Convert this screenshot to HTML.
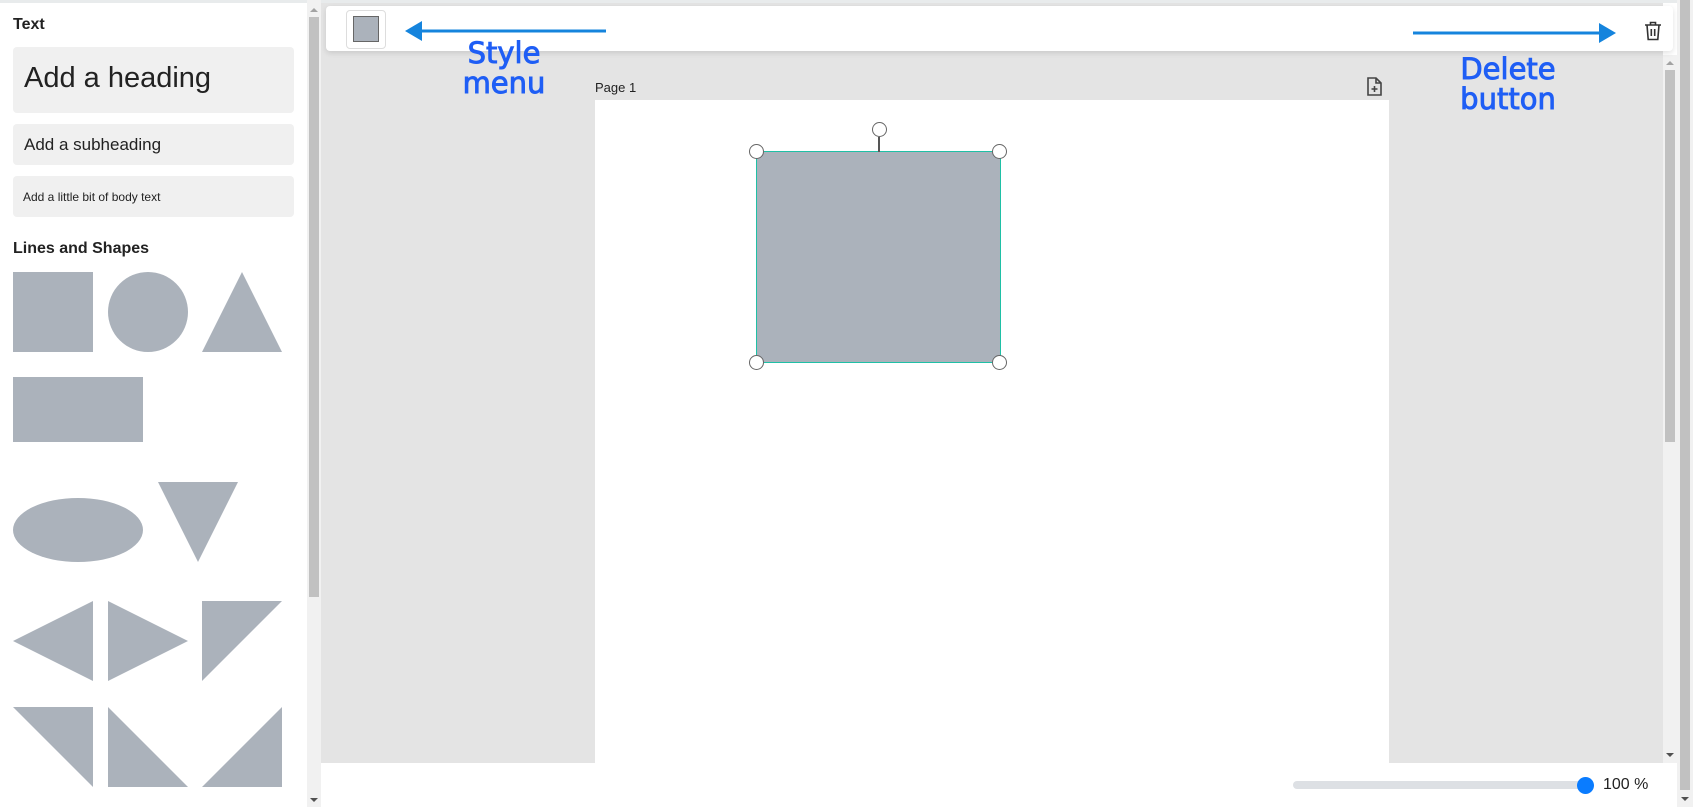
<!DOCTYPE html>
<html><head><meta charset="utf-8"><style>
*{margin:0;padding:0;box-sizing:border-box}
body{width:1693px;height:807px;overflow:hidden;background:#fff;font-family:"Liberation Sans",Arial,sans-serif;position:relative;color:#222}
.a{position:absolute}
.card{position:absolute;left:13px;width:281px;background:#f0f0f0;border-radius:4px;color:#222}
.lbl{position:absolute;font-weight:bold;font-size:16px;color:#222}
.ann{position:absolute;font-family:"DejaVu Sans",sans-serif;font-weight:normal;-webkit-text-stroke:0.9px #1f5ef5;font-size:29px;color:#1f5ef5;text-align:center;line-height:30px}
.h{position:absolute;width:15px;height:15px;border-radius:50%;background:#fff;border:1px solid #666}
</style></head><body>
<div class="a" style="left:0;top:0;width:1693px;height:3px;background:#e8ebec"></div>
<div class="lbl" style="left:13px;top:16px">Text</div>
<div class="card" style="top:47px;height:66px"><div class="a" style="left:11px;top:15px;font-size:29px">Add a heading</div></div>
<div class="card" style="top:124px;height:41px"><div class="a" style="left:11px;top:11px;font-size:17px">Add a subheading</div></div>
<div class="card" style="top:176px;height:41px"><div class="a" style="left:10px;top:14px;font-size:12px">Add a little bit of body text</div></div>
<div class="lbl" style="left:13px;top:240px">Lines and Shapes</div>
<svg class="a" style="left:0;top:260px" width="300" height="540" fill="#abb2bb">
<rect x="13" y="12" width="80" height="80"/>
<circle cx="148" cy="52" r="40"/>
<polygon points="242,12 282,92 202,92"/>
<rect x="13" y="117" width="130" height="65"/>
<ellipse cx="78" cy="270" rx="65" ry="32"/>
<polygon points="158,222 238,222 198,302"/>
<polygon points="93,341 93,421 13,381"/>
<polygon points="108,341 188,381 108,421"/>
<polygon points="202,341 282,341 202,421"/>
<polygon points="13,447 93,447 93,527"/>
<polygon points="108,447 188,527 108,527"/>
<polygon points="282,447 282,527 202,527"/>
</svg>
<div class="a" style="left:307px;top:0;width:14px;height:807px;background:#f1f1f1"></div>
<div class="a" style="left:309px;top:17px;width:10px;height:580px;background:#c1c1c1"></div>
<div class="a" style="left:310px;top:8px;border-left:4px solid transparent;border-right:4px solid transparent;border-bottom:4px solid #a3a3a3"></div>
<div class="a" style="left:310px;top:798px;border-left:4px solid transparent;border-right:4px solid transparent;border-top:4px solid #505050"></div>
<div class="a" style="left:321px;top:3px;width:1342px;height:760px;background:#e4e4e4"></div>
<div class="a" style="left:1663px;top:55px;width:14px;height:708px;background:#f1f1f1"></div>
<div class="a" style="left:1665px;top:70px;width:10px;height:372px;background:#c1c1c1"></div>
<div class="a" style="left:1666px;top:61px;border-left:4px solid transparent;border-right:4px solid transparent;border-bottom:4px solid #a3a3a3"></div>
<div class="a" style="left:1666px;top:753px;border-left:4px solid transparent;border-right:4px solid transparent;border-top:4px solid #505050"></div>
<div class="a" style="left:1677px;top:0;width:16px;height:807px;background:#f1f1f1"></div>
<div class="a" style="left:1680px;top:0;width:10px;height:790px;background:#c1c1c1"></div>
<div class="a" style="left:1681px;top:797px;border-left:4px solid transparent;border-right:4px solid transparent;border-top:4px solid #505050"></div>
<div class="a" style="left:595px;top:80px;font-size:13px;color:#222">Page 1</div>
<svg class="a" style="left:1366px;top:77px" width="16" height="20" fill="none" stroke="#444" stroke-width="1.6"><path d="M2 1h8l5 5v12H2z"/><path d="M10 1v5h5"/><path d="M8.5 9v6M5.5 12h6"/></svg>
<div class="a" style="left:595px;top:100px;width:794px;height:663px;background:#fff"></div>
<div class="a" style="left:756px;top:151px;width:245px;height:212px;background:#abb2bb;border:1.5px solid #1fc0a6"></div>
<div class="a" style="left:878px;top:137px;width:1.5px;height:15px;background:#555"></div>
<div class="h" style="left:872px;top:122px"></div>
<div class="h" style="left:749px;top:144px"></div>
<div class="h" style="left:992px;top:144px"></div>
<div class="h" style="left:749px;top:355px"></div>
<div class="h" style="left:992px;top:355px"></div>
<div class="a" style="left:326px;top:6px;width:1347px;height:45px;background:#fff;border-radius:4px;box-shadow:0 2px 6px rgba(0,0,0,.12)"></div>
<div class="a" style="left:346px;top:10px;width:40px;height:39px;border:1px solid #ddd;border-radius:4px;background:#fff"></div>
<div class="a" style="left:353px;top:16px;width:26px;height:26px;background:#abb2bb;border:1px solid #666"></div>
<svg class="a" style="left:0;top:0" width="1693" height="60"><path d="M420 31H606" stroke="#1584dd" stroke-width="3"/><polygon points="405,31 422,21 422,41" fill="#1584dd"/>
<path d="M1413 33H1600" stroke="#1584dd" stroke-width="3"/><polygon points="1616,33 1599,23 1599,43" fill="#1584dd"/></svg>
<svg class="a" style="left:1644px;top:21px" width="18" height="20" fill="none" stroke="#333" stroke-width="1.6"><path d="M1 4h16M6.5 4V1.5h5V4M3 4l1.2 14.5h9.6L15 4M7.3 8v7M10.7 8v7"/></svg>
<div class="ann" style="left:444px;top:38px;width:120px">Style<br>menu</div>
<div class="ann" style="left:1438px;top:54px;width:140px">Delete<br>button</div>
<div class="a" style="left:1293px;top:781px;width:293px;height:8px;border-radius:4px;background:#dde0e4"></div>
<div class="a" style="left:1577px;top:777px;width:17px;height:17px;border-radius:50%;background:#0a7cff"></div>
<div class="a" style="left:1603px;top:776px;font-size:16px;color:#222">100 %</div>
</body></html>
